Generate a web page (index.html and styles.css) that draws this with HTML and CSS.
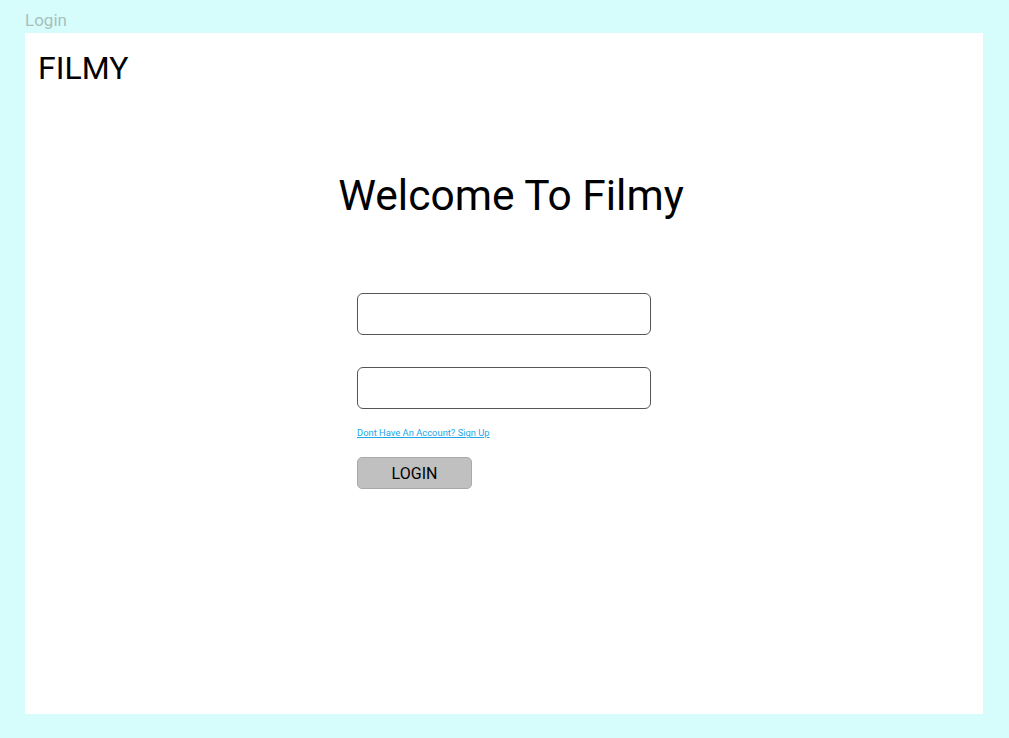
FILE: index.html
```html
<!DOCTYPE html>
<html>
<head>
<meta charset="utf-8">
<link rel="stylesheet" href="styles.css">
</head>
<body>
<div class="label">Login</div>
<main class="frame">
  <div class="brand">FILMY</div>
  <h1 class="title">Welcome To Filmy</h1>
  <form class="form">
    <input class="field" type="text">
    <input class="field" type="password">
    <a class="signup" href="#">Dont Have An Account? Sign Up</a>
    <button class="btn" type="button">LOGIN</button>
  </form>
</main>
</body>
</html>
```

FILE: styles.css
```css
html, body {
  margin: 0;
  padding: 0;
}
body {
  background: #d6fdfb;
  width: 1009px;
  height: 738px;
  overflow: hidden;
  font-family: Roboto, "Liberation Sans", sans-serif;
}
.label {
  height: 33px;
  box-sizing: border-box;
  padding: 10px 0 0 25px;
  font-size: 17px;
  line-height: 20px;
  color: #a9bfbd;
}
.frame {
  margin-left: 25px;
  width: 958px;
  height: 681px;
  background: #fff;
  display: flex;
  flex-direction: column;
}
.brand {
  padding: 19px 0 0 13px;
  font-size: 32px;
  line-height: 33px;
  color: #000;
}
.title {
  margin: 0;
  padding: 89px 0 0 14px;
  text-align: center;
  font-weight: 400;
  font-size: 42.5px;
  line-height: 43px;
  color: #000;
}
.form {
  margin: 0 0 0 332px;
  padding-top: 76px;
  display: flex;
  flex-direction: column;
  align-items: flex-start;
}
.field {
  width: 294px;
  height: 42px;
  box-sizing: border-box;
  border: 1px solid #555;
  border-radius: 6px;
  margin: 0 0 32px 0;
  padding: 0;
  background: #fff;
  outline: none;
}
.field + .field {
  margin-bottom: 0;
}
.signup {
  margin-top: 18px;
  font-size: 9.4px;
  line-height: 12px;
  color: #1aa6e8;
  text-decoration: underline;
}
.btn {
  margin-top: 18px;
  width: 115px;
  height: 32px;
  box-sizing: border-box;
  background: #c0c0c0;
  border: 1px solid #aaa;
  border-radius: 5px;
  font-family: Roboto, "Liberation Sans", sans-serif;
  font-size: 16px;
  color: #000;
  padding: 0;
}
```
